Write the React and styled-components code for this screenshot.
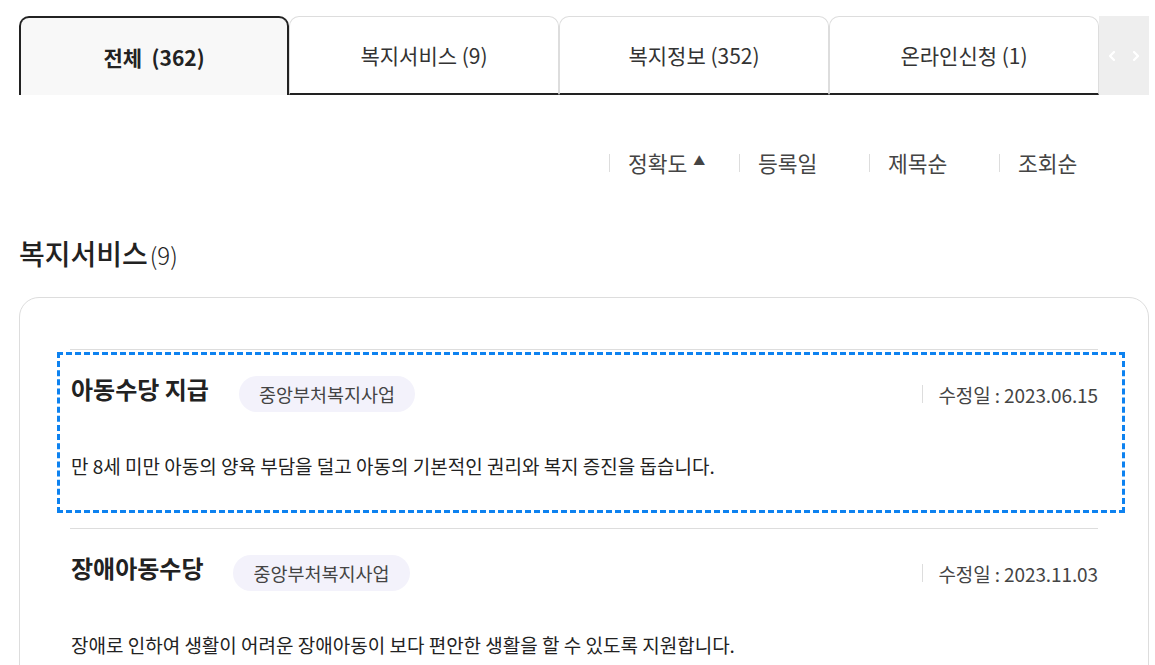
import React from 'react';
import styled, { createGlobalStyle } from 'styled-components';
import { ChevronLeft, ChevronRight } from 'lucide-react';

const GlobalStyle = createGlobalStyle`
  * { box-sizing: border-box; }
  body {
    margin: 0;
    background: #fff;
    font-family: "Noto Sans CJK KR", "Noto Sans", sans-serif;
    color: #222;
  }
  ul { list-style: none; margin: 0; padding: 0; }
  a { color: inherit; text-decoration: none; }
`;

const Page = styled.div`
  width: 1149px;
  padding: 16px 0 0 19px;
`;

const TabBar = styled.div`
  display: flex;
  height: 79px;
`;

const Tab = styled.button`
  flex: none;
  width: 270px;
  height: 79px;
  margin: 0;
  padding: 0;
  font-family: inherit;
  font-size: 21px;
  white-space: pre;
  cursor: pointer;
  border-radius: 10px 10px 0 0;
  color: ${p => (p.$active ? '#222' : '#333')};
  font-weight: ${p => (p.$active ? 700 : 400)};
  background: ${p => (p.$active ? '#f8f8f8' : '#fff')};
  border: ${p => (p.$active ? '2px solid #222' : '1px solid #ddd')};
  border-bottom: ${p => (p.$active ? 'none' : '2px solid #222')};
`;

const ArrowBox = styled.div`
  width: 50px;
  height: 79px;
  background: #eee;
  display: flex;
  align-items: center;
  justify-content: center;
  gap: 8px;
  color: #fff;
`;

const SortBar = styled.ul`
  display: flex;
  justify-content: flex-end;
  padding: 55px 20px 0 0;
  height: 81px;
`;

const SortItem = styled.li`
  width: 130px;
  display: flex;
  align-items: center;
  padding-left: 19px;
  font-size: 21.5px;
  color: #444;
  line-height: 26px;
  position: relative;
  &::before {
    content: '';
    position: absolute;
    left: 0;
    top: 4px;
    width: 1px;
    height: 18px;
    background: #ddd;
  }
`;

const Caret = styled.span`
  margin-left: 6px;
  font-size: 12px;
  color: #444;
  position: relative;
  top: -2px;
`;

const SectionTitle = styled.h2`
  margin: 0;
  padding-top: 60px;
  font-size: 28px;
  font-weight: 500;
  line-height: 34px;
  color: #222;
  span {
    font-size: 24px;
    font-weight: 300;
    margin-left: 2px;
  }
`;

const Card = styled.div`
  margin-top: 25px;
  border: 1px solid #ddd;
  border-radius: 20px;
  padding: 51px 50px 0;
  height: 400px;
`;

const Item = styled.li`
  border-top: 1px solid #ddd;
  padding: 5px 0 18px;
`;

const ItemLink = styled.a`
  display: block;
  margin: 0 -24px 0 -10px;
  padding: 21px 24px 31px 11px;
  outline: ${p => (p.$focused ? '3px dashed #0d82f0' : 'none')};
`;

const ItemHead = styled.div`
  display: flex;
  align-items: flex-start;
`;

const ItemTitle = styled.strong`
  font-size: 24px;
  font-weight: 700;
  line-height: 26px;
  color: #222;
`;

const Tag = styled.span`
  margin-left: 30px;
  height: 36px;
  padding: 0 20px;
  border-radius: 18px;
  background: #f3f2fb;
  font-size: 18.5px;
  color: #444;
  display: flex;
  align-items: center;
`;

const DateText = styled.span`
  margin-left: auto;
  height: 36px;
  display: flex;
  align-items: center;
  font-size: 19px;
  letter-spacing: -0.1px;
  color: #444;
  &::before {
    content: '';
    width: 1px;
    height: 18px;
    background: #ddd;
    margin-right: 15px;
  }
`;

const Desc = styled.p`
  margin: 40px 0 0;
  font-size: 19px;
  line-height: 27px;
  color: #222;
`;

const tabs = [
  { label: '전체  (362)', active: true },
  { label: '복지서비스 (9)' },
  { label: '복지정보 (352)' },
  { label: '온라인신청 (1)' },
];

const services = [
  {
    title: '아동수당 지급',
    tag: '중앙부처복지사업',
    date: '2023.06.15',
    desc: '만 8세 미만 아동의 양육 부담을 덜고 아동의 기본적인 권리와 복지 증진을 돕습니다.',
    focused: true,
  },
  {
    title: '장애아동수당',
    tag: '중앙부처복지사업',
    date: '2023.11.03',
    desc: '장애로 인하여 생활이 어려운 장애아동이 보다 편안한 생활을 할 수 있도록 지원합니다.',
  },
];

export default function App() {
  return (
    <Page>
      <GlobalStyle />
      <TabBar>
        {tabs.map(t => (
          <Tab key={t.label} $active={t.active}>{t.label}</Tab>
        ))}
        <ArrowBox>
          <ChevronLeft size={16} strokeWidth={3.5} />
          <ChevronRight size={16} strokeWidth={3.5} />
        </ArrowBox>
      </TabBar>

      <SortBar>
        <SortItem>정확도<Caret>▲</Caret></SortItem>
        <SortItem>등록일</SortItem>
        <SortItem>제목순</SortItem>
        <SortItem>조회순</SortItem>
      </SortBar>

      <SectionTitle>복지서비스<span>(9)</span></SectionTitle>

      <Card>
        <ul>
          {services.map(s => (
            <Item key={s.title}>
              <ItemLink href="#" $focused={s.focused}>
                <ItemHead>
                  <ItemTitle>{s.title}</ItemTitle>
                  <Tag>{s.tag}</Tag>
                  <DateText>수정일 : {s.date}</DateText>
                </ItemHead>
                <Desc>{s.desc}</Desc>
              </ItemLink>
            </Item>
          ))}
        </ul>
      </Card>
    </Page>
  );
}
